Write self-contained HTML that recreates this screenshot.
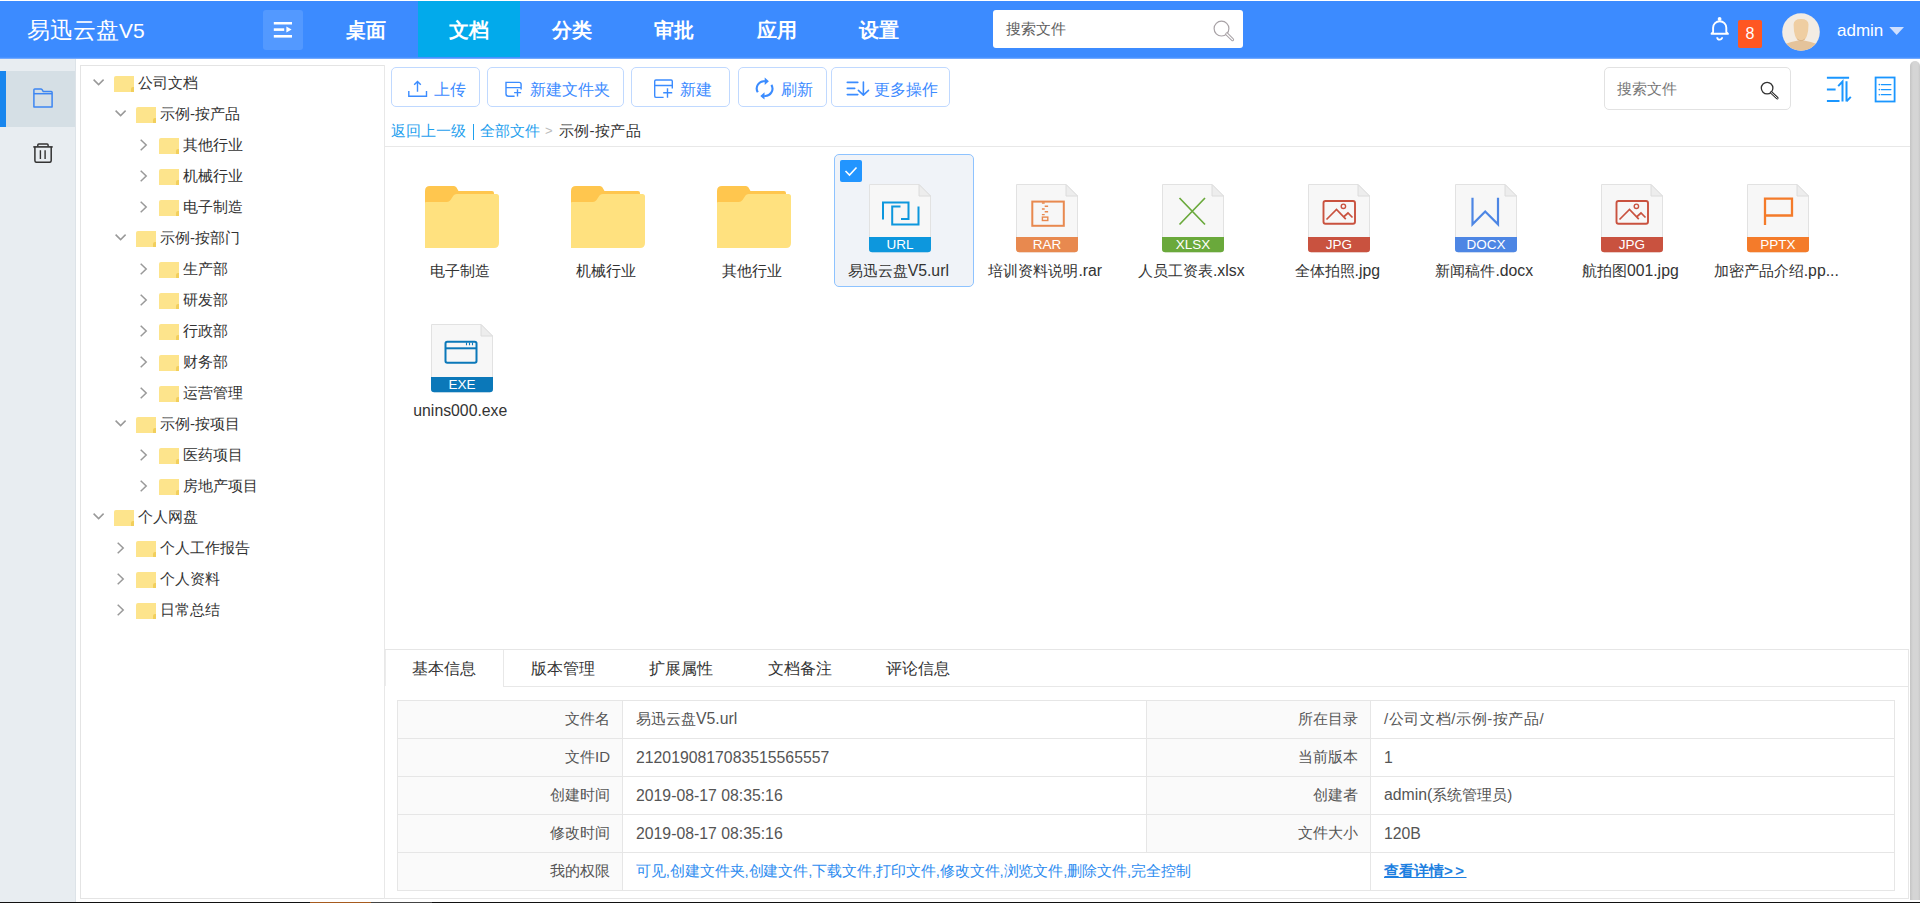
<!DOCTYPE html>
<html><head><meta charset="utf-8">
<style>
*{margin:0;padding:0;box-sizing:border-box}
html,body{width:1920px;height:903px;overflow:hidden;background:#fff;font-family:"Liberation Sans",sans-serif;color:#333}
.a{position:absolute}
#hdr{position:absolute;left:0;top:1px;width:1920px;height:56px;background:#3c8bff}
#hdrb1{position:absolute;left:0;top:57px;width:1920px;height:1px;background:#4892ff}
#hdrb2{position:absolute;left:0;top:58px;width:1920px;height:1px;background:#72a9ff}
.logo{left:27px;top:15px;font-size:22.5px;color:#fff;line-height:30px;white-space:nowrap}
.hamb{left:263px;top:9px;width:40px;height:40px;border-radius:3px;background:rgba(255,255,255,.12)}
.nav{top:0;height:56px;text-align:center;color:#fff;font-weight:bold;font-size:20px;line-height:58px;white-space:nowrap}
.nav.on{background:#02aaeb}
.srch{left:993px;top:9px;width:250px;height:38px;background:#fff;border-radius:3px}
.srch span{position:absolute;left:13px;top:0;line-height:38px;font-size:15px;color:#606060}
#side{position:absolute;left:0;top:59px;width:76px;height:844px;background:#e8edf1;border-right:1px solid #dde3e8}
#tree{position:absolute;left:80px;top:65px;width:305px;height:834px;border:1px solid #e4e4e4;background:#fff}
.tr{position:absolute;height:31px;white-space:nowrap;font-size:15px;color:#333;line-height:31px}
.fd{position:absolute;width:20px;height:16px;background:#fde48c;border-radius:2px 0 0 0}
.fd:after{content:"";position:absolute;right:0;bottom:0;width:3px;height:5px;background:#f2cf5c;border-radius:2px 0 0 0}
.btn{position:absolute;top:67px;height:40px;border:1px solid #c0d9ff;border-radius:5px;background:#fff;color:#3d8bff;font-size:16px;line-height:38px;white-space:nowrap}
.btn svg{position:absolute}
.btn span{position:absolute;top:3px}
.sep{position:absolute;background:#e8e8e8}
.item{position:absolute;width:140px;height:133px}
.lbl{position:absolute;width:200px;text-align:center;font-size:15px;color:#333;white-space:nowrap;line-height:20px}
.pg{position:absolute;width:62px;height:68px}
.tab{position:absolute;top:651px;height:36px;text-align:center;font-size:16px;line-height:36px;color:#333;white-space:nowrap}
table{position:absolute;left:397px;top:700px;width:1497px;border-collapse:collapse;font-size:15px;table-layout:fixed}
td{border:1px solid #e6e6e6;height:38px;padding:0 12px;color:#555;white-space:nowrap;overflow:hidden}
td.k{background:#fafafa;text-align:right}
td.v{padding-left:13px}
.lnk{color:#2d8cf0}
.en{font-size:15.8px}
</style></head><body>
<div id="hdrb1"></div><div id="hdrb2"></div>
<div id="hdr">
  <div class="a logo">易迅云盘<span style="font-size:21px">V5</span></div>
  <div class="a hamb">
    <svg width="40" height="40" viewBox="0 0 40 40" style="position:absolute;left:0;top:0">
      <rect x="10.8" y="12" width="18.2" height="2.5" fill="#fff"/>
      <rect x="10.8" y="18.3" width="10.4" height="2.6" fill="#fff"/>
      <path d="M23.4,16.6 L28.6,19.6 L23.4,22.6 Z" fill="#fff"/>
      <rect x="10.8" y="25" width="18.2" height="2.6" fill="#fff"/>
    </svg>
  </div>
  <div class="a nav" style="left:315.2px;width:102.56px">桌面</div>
  <div class="a nav on" style="left:417.8px;width:102.56px">文档</div>
  <div class="a nav" style="left:520.3px;width:102.56px">分类</div>
  <div class="a nav" style="left:622.9px;width:102.56px">审批</div>
  <div class="a nav" style="left:725.4px;width:102.56px">应用</div>
  <div class="a nav" style="left:828px;width:102.56px">设置</div>
  <div class="a srch"><span>搜索文件</span>
    <svg width="30" height="30" viewBox="0 0 30 30" style="position:absolute;left:214px;top:4px">
      <circle cx="14.5" cy="14.6" r="7.4" fill="none" stroke="#a8a2a6" stroke-width="1.2"/>
      <path d="M19.8,20 L25.5,25.6" stroke="#a8a2a6" stroke-width="3.2" stroke-linecap="round"/>
      <path d="M19.8,20 L25.5,25.6" stroke="#fff" stroke-width="1.2" stroke-linecap="round"/>
    </svg>
  </div>
  <svg class="a" width="30" height="32" viewBox="0 0 30 32" style="left:1705px;top:11px">
    <circle cx="14.6" cy="6.9" r="1.9" fill="#fff"/>
    <path d="M6.5,21.8 L8.1,20 V15.8 A6.6,6.6 0 0 1 21.3,15.8 V20 L23,21.8 Z" fill="none" stroke="#fff" stroke-width="1.9" stroke-linejoin="round"/>
    <path d="M12.2,25.2 A2.5,2.5 0 0 0 17.2,25.2" fill="none" stroke="#fff" stroke-width="1.8"/>
  </svg>
  <div class="a" style="left:1738px;top:19px;width:24px;height:28px;background:#ff5722;border-radius:2px;color:#fff;font-size:16px;line-height:28px;text-align:center">8</div>
  <svg class="a" width="40" height="40" viewBox="0 0 40 40" style="left:1781px;top:11px">
    <defs><clipPath id="avc"><circle cx="20" cy="20" r="18.8"/></clipPath></defs>
    <circle cx="20" cy="20" r="18.8" fill="#f3ece3"/>
    <g clip-path="url(#avc)">
      <path d="M4,40 L4,32 Q10,29.5 17,28.5 L23,28.5 Q30,29.5 36,32 L36,40 Z" fill="#e4c39b"/>
      <path d="M12.6,12.5 Q12.6,6.9 20,6.9 Q27.5,6.9 27.5,12.5 Q27.5,19 26,23.5 Q24.5,28.8 20,29 Q15.5,28.8 14,23.5 Q12.6,19 12.6,12.5 Z" fill="#efcea2"/>
      <path d="M16.3,27 Q20,30.5 23.8,27" fill="none" stroke="#d9b285" stroke-width="1"/>
    </g>
  </svg>
  <div class="a" style="left:1837px;top:15px;font-size:17px;line-height:30px;color:#fff">admin</div>
  <svg class="a" width="16" height="10" viewBox="0 0 16 10" style="left:1889px;top:25px"><path d="M0.3,1 L15,1 L7.65,9 Z" fill="#cfe0ff"/></svg>
</div>
<div id="side">
  <div class="a" style="left:0;top:12px;width:75px;height:56px;background:#d5dfe5"></div>
  <div class="a" style="left:0;top:12px;width:6px;height:56px;background:#1886ee"></div>
  <svg class="a" width="20" height="20" viewBox="0 0 20 20" style="left:33px;top:29px">
    <path d="M0.9,19.1 V1.8 Q0.9,0.9 1.8,0.9 H7.8 Q8.6,0.9 9.1,1.7 L10.1,3.4 H18.3 Q19.1,3.4 19.1,4.2 V19.1 Z" fill="none" stroke="#3d86f2" stroke-width="1.5" stroke-linejoin="round"/>
    <path d="M0.9,5.7 H19.1" stroke="#3d86f2" stroke-width="1.5"/>
  </svg>
  <svg class="a" width="20" height="20" viewBox="0 0 20 20" style="left:33px;top:84px">
    <path d="M4.8,3.6 V1.9 Q4.8,0.9 5.8,0.9 H14.1 Q15.1,0.9 15.1,1.9 V3.6" fill="none" stroke="#333" stroke-width="1.5"/>
    <path d="M0.3,3.9 H19.7" stroke="#333" stroke-width="1.6"/>
    <path d="M1.9,4 V17.6 Q1.9,19.3 3.6,19.3 H16.5 Q18.2,19.3 18.2,17.6 V4" fill="none" stroke="#333" stroke-width="1.5"/>
    <path d="M7.4,7.3 V15.9 M12.1,7.3 V15.9" stroke="#333" stroke-width="1.4"/>
  </svg>
</div>
<div id="tree"></div>
<svg class="a" width="12" height="8" viewBox="0 0 12 8" style="left:93px;top:79px"><path d="M0.6,0.6 L5.6,5.6 L10.6,0.6" fill="none" stroke="#999" stroke-width="1.5"/></svg>
<div class="fd" style="left:114px;top:76px"></div>
<div class="tr" style="left:138px;top:67px">公司文档</div>
<svg class="a" width="12" height="8" viewBox="0 0 12 8" style="left:115px;top:110px"><path d="M0.6,0.6 L5.6,5.6 L10.6,0.6" fill="none" stroke="#999" stroke-width="1.5"/></svg>
<div class="fd" style="left:136px;top:107px"></div>
<div class="tr" style="left:160px;top:98px">示例-按产品</div>
<svg class="a" width="8" height="12" viewBox="0 0 8 12" style="left:140px;top:138.5px"><path d="M0.7,0.7 L6.2,6 L0.7,11.3" fill="none" stroke="#999" stroke-width="1.5"/></svg>
<div class="fd" style="left:159px;top:138px"></div>
<div class="tr" style="left:183px;top:129px">其他行业</div>
<svg class="a" width="8" height="12" viewBox="0 0 8 12" style="left:140px;top:169.5px"><path d="M0.7,0.7 L6.2,6 L0.7,11.3" fill="none" stroke="#999" stroke-width="1.5"/></svg>
<div class="fd" style="left:159px;top:169px"></div>
<div class="tr" style="left:183px;top:160px">机械行业</div>
<svg class="a" width="8" height="12" viewBox="0 0 8 12" style="left:140px;top:200.5px"><path d="M0.7,0.7 L6.2,6 L0.7,11.3" fill="none" stroke="#999" stroke-width="1.5"/></svg>
<div class="fd" style="left:159px;top:200px"></div>
<div class="tr" style="left:183px;top:191px">电子制造</div>
<svg class="a" width="12" height="8" viewBox="0 0 12 8" style="left:115px;top:234px"><path d="M0.6,0.6 L5.6,5.6 L10.6,0.6" fill="none" stroke="#999" stroke-width="1.5"/></svg>
<div class="fd" style="left:136px;top:231px"></div>
<div class="tr" style="left:160px;top:222px">示例-按部门</div>
<svg class="a" width="8" height="12" viewBox="0 0 8 12" style="left:140px;top:262.5px"><path d="M0.7,0.7 L6.2,6 L0.7,11.3" fill="none" stroke="#999" stroke-width="1.5"/></svg>
<div class="fd" style="left:159px;top:262px"></div>
<div class="tr" style="left:183px;top:253px">生产部</div>
<svg class="a" width="8" height="12" viewBox="0 0 8 12" style="left:140px;top:293.5px"><path d="M0.7,0.7 L6.2,6 L0.7,11.3" fill="none" stroke="#999" stroke-width="1.5"/></svg>
<div class="fd" style="left:159px;top:293px"></div>
<div class="tr" style="left:183px;top:284px">研发部</div>
<svg class="a" width="8" height="12" viewBox="0 0 8 12" style="left:140px;top:324.5px"><path d="M0.7,0.7 L6.2,6 L0.7,11.3" fill="none" stroke="#999" stroke-width="1.5"/></svg>
<div class="fd" style="left:159px;top:324px"></div>
<div class="tr" style="left:183px;top:315px">行政部</div>
<svg class="a" width="8" height="12" viewBox="0 0 8 12" style="left:140px;top:355.5px"><path d="M0.7,0.7 L6.2,6 L0.7,11.3" fill="none" stroke="#999" stroke-width="1.5"/></svg>
<div class="fd" style="left:159px;top:355px"></div>
<div class="tr" style="left:183px;top:346px">财务部</div>
<svg class="a" width="8" height="12" viewBox="0 0 8 12" style="left:140px;top:386.5px"><path d="M0.7,0.7 L6.2,6 L0.7,11.3" fill="none" stroke="#999" stroke-width="1.5"/></svg>
<div class="fd" style="left:159px;top:386px"></div>
<div class="tr" style="left:183px;top:377px">运营管理</div>
<svg class="a" width="12" height="8" viewBox="0 0 12 8" style="left:115px;top:420px"><path d="M0.6,0.6 L5.6,5.6 L10.6,0.6" fill="none" stroke="#999" stroke-width="1.5"/></svg>
<div class="fd" style="left:136px;top:417px"></div>
<div class="tr" style="left:160px;top:408px">示例-按项目</div>
<svg class="a" width="8" height="12" viewBox="0 0 8 12" style="left:140px;top:448.5px"><path d="M0.7,0.7 L6.2,6 L0.7,11.3" fill="none" stroke="#999" stroke-width="1.5"/></svg>
<div class="fd" style="left:159px;top:448px"></div>
<div class="tr" style="left:183px;top:439px">医药项目</div>
<svg class="a" width="8" height="12" viewBox="0 0 8 12" style="left:140px;top:479.5px"><path d="M0.7,0.7 L6.2,6 L0.7,11.3" fill="none" stroke="#999" stroke-width="1.5"/></svg>
<div class="fd" style="left:159px;top:479px"></div>
<div class="tr" style="left:183px;top:470px">房地产项目</div>
<svg class="a" width="12" height="8" viewBox="0 0 12 8" style="left:93px;top:513px"><path d="M0.6,0.6 L5.6,5.6 L10.6,0.6" fill="none" stroke="#999" stroke-width="1.5"/></svg>
<div class="fd" style="left:114px;top:510px"></div>
<div class="tr" style="left:138px;top:501px">个人网盘</div>
<svg class="a" width="8" height="12" viewBox="0 0 8 12" style="left:117px;top:541.5px"><path d="M0.7,0.7 L6.2,6 L0.7,11.3" fill="none" stroke="#999" stroke-width="1.5"/></svg>
<div class="fd" style="left:136px;top:541px"></div>
<div class="tr" style="left:160px;top:532px">个人工作报告</div>
<svg class="a" width="8" height="12" viewBox="0 0 8 12" style="left:117px;top:572.5px"><path d="M0.7,0.7 L6.2,6 L0.7,11.3" fill="none" stroke="#999" stroke-width="1.5"/></svg>
<div class="fd" style="left:136px;top:572px"></div>
<div class="tr" style="left:160px;top:563px">个人资料</div>
<svg class="a" width="8" height="12" viewBox="0 0 8 12" style="left:117px;top:603.5px"><path d="M0.7,0.7 L6.2,6 L0.7,11.3" fill="none" stroke="#999" stroke-width="1.5"/></svg>
<div class="fd" style="left:136px;top:603px"></div>
<div class="tr" style="left:160px;top:594px">日常总结</div><div class="btn" style="left:391px;width:89px"><svg width="30" height="28" viewBox="0 0 30 28" style="left:10px;top:6px"><path d="M15.5,17.8 V7.4 M12.2,10.8 L15.5,7.4 L18.8,10.8 M6.8,16.9 V22.2 H24.5 V16.9" fill="none" stroke="#3b8cff" stroke-width="1.4"/></svg><span style="left:42px">上传</span></div>
<div class="btn" style="left:487px;width:137px"><svg width="28" height="28" viewBox="0 0 28 28" style="left:12px;top:6px"><path d="M14.6,22.2 H8.5 Q6,22.2 6,19.7 V8.4 H19.1 Q21.1,8.4 21.1,10.4 V15.5 M6,13.6 H21.1 M17.5,15.2 V22.6 M14.1,18.6 H21.1" fill="none" stroke="#3b8cff" stroke-width="1.4"/></svg><span style="left:42px">新建文件夹</span></div>
<div class="btn" style="left:631px;width:99px"><svg width="28" height="28" viewBox="0 0 28 28" style="left:18px;top:6px"><path d="M13.6,23.4 H6.2 Q4.7,23.4 4.7,21.9 V7.2 Q4.7,6 5.9,6 H21.1 Q22.3,6 22.3,7.2 V14.6 M4.7,11.5 H22.3 M17.5,14.3 V23.7 M13.2,18.8 H22.2" fill="none" stroke="#3b8cff" stroke-width="1.4"/></svg><span style="left:47.5px">新建</span></div>
<div class="btn" style="left:738px;width:89px"><svg width="28" height="28" viewBox="0 0 28 28" style="left:11px;top:6px"><path d="M7.8,18.3 A7.3,7.3 0 0 1 15,7.3 M21.4,10.9 A7.3,7.3 0 0 1 14.2,21.9" fill="none" stroke="#3b8cff" stroke-width="2.1"/><path d="M14.7,3.6 L18.9,7.3 L14.7,11 Z M14.5,18.2 L10.3,21.9 L14.5,25.6 Z" fill="#3b8cff"/></svg><span style="left:42px">刷新</span></div>
<div class="btn" style="left:831px;width:119px"><svg width="32" height="28" viewBox="0 0 32 28" style="left:10px;top:6px"><path d="M5.3,8.4 H15.8 M5.3,14.4 H12.7 M5.3,20.6 H15.8 M21.4,8 V21.1 M16.4,16.3 L21.4,21.1 L26.5,16.3" fill="none" stroke="#3b8cff" stroke-width="1.6" stroke-linecap="round" stroke-linejoin="round"/></svg><span style="left:42px">更多操作</span></div>
<div class="a" style="left:1604px;top:67px;width:187px;height:43px;border:1px solid #e2e2e2;border-radius:5px;background:#fff">
<span class="a" style="left:12px;top:0;line-height:41px;font-size:15px;color:#777">搜索文件</span>
<svg class="a" width="36" height="30" viewBox="0 0 36 30" style="left:145px;top:8px"><circle cx="17.1" cy="12.1" r="5.8" fill="none" stroke="#333" stroke-width="1.3"/><path d="M21.3,16.6 L27.2,22.1" stroke="#333" stroke-width="2.8" stroke-linecap="round"/><path d="M21.3,16.6 L27.2,22.1" stroke="#fff" stroke-width="0.9" stroke-linecap="round"/></svg>
</div>
<svg class="a" width="34" height="34" viewBox="0 0 34 34" style="left:1822px;top:72px"><path d="M4.9,5.8 H27.1 M4.9,17.5 H13.6 M4.9,29 H17.5 M16.2,14.1 L20.5,9.6 V29.4 M24.5,29.4 V9.2 M24.5,29.4 L28.8,24.9" fill="none" stroke="#1a96ff" stroke-width="2"/></svg>
<svg class="a" width="24" height="28" viewBox="0 0 24 28" style="left:1872px;top:75px"><rect x="3.6" y="2.5" width="19" height="24" fill="none" stroke="#1a96ff" stroke-width="1.8"/><path d="M9.3,9.6 H18.9 M9.3,14.6 H18.9 M9.3,19.7 H18.9" stroke="#1a96ff" stroke-width="1.3" stroke-linecap="round"/><circle cx="7.3" cy="9.6" r="0.8" fill="#1a96ff"/><circle cx="7.3" cy="14.6" r="0.8" fill="#1a96ff"/><circle cx="7.3" cy="19.7" r="0.8" fill="#1a96ff"/></svg>
<div class="a" style="left:391px;top:120.5px;font-size:15px;line-height:20px;white-space:nowrap;color:#1ea0ee">返回上一级</div>
<div class="a" style="left:472.5px;top:124px;width:1.2px;height:16px;background:#1ea0ee"></div>
<div class="a" style="left:479.5px;top:120.5px;font-size:15px;line-height:20px;white-space:nowrap;color:#1ea0ee">全部文件</div>
<div class="a" style="left:545px;top:120.5px;font-size:13px;line-height:20px;white-space:nowrap;color:#bbb">&gt;</div>
<div class="a" style="left:558.5px;top:120.5px;font-size:15px;line-height:20px;white-space:nowrap;color:#333;letter-spacing:0.45px">示例-按产品</div>
<div class="sep" style="left:384px;top:65px;width:1px;height:834px"></div>
<div class="sep" style="left:385px;top:146px;width:1525px;height:1px"></div>
<div class="a" style="left:834.0px;top:154px;width:140px;height:133px;border:1px solid #8ec3ff;border-radius:5px;background:#f0f3f8"></div>
<div class="a" style="left:840.0px;top:160px;width:22px;height:22px;background:#2295ff;border-radius:2px"><svg width="22" height="22" viewBox="0 0 22 22"><path d="M5.5,11 L9.5,15 L16.5,7.5" fill="none" stroke="#fff" stroke-width="1.6"/></svg></div>
<svg class="a" width="75" height="63" viewBox="0 0 75 63" style="left:425.0px;top:186px">
<path d="M0,5 Q0,0 5,0 H29 Q30.5,0 31.5,1.5 L33.5,5 H67 Q69,5 69,7 V30 H0 Z" fill="#ffc64e"/>
<path d="M0,17 Q0,16 1,16 H22 Q24,16 25.5,14 L28.5,9.5 Q29.5,8 31.5,8 H71.5 Q74,8 74,10.5 V57 Q74,62 69,62 H0 Z" fill="#ffe17f"/>
</svg>
<svg class="a" width="75" height="63" viewBox="0 0 75 63" style="left:571.0px;top:186px">
<path d="M0,5 Q0,0 5,0 H29 Q30.5,0 31.5,1.5 L33.5,5 H67 Q69,5 69,7 V30 H0 Z" fill="#ffc64e"/>
<path d="M0,17 Q0,16 1,16 H22 Q24,16 25.5,14 L28.5,9.5 Q29.5,8 31.5,8 H71.5 Q74,8 74,10.5 V57 Q74,62 69,62 H0 Z" fill="#ffe17f"/>
</svg>
<svg class="a" width="75" height="63" viewBox="0 0 75 63" style="left:717.0px;top:186px">
<path d="M0,5 Q0,0 5,0 H29 Q30.5,0 31.5,1.5 L33.5,5 H67 Q69,5 69,7 V30 H0 Z" fill="#ffc64e"/>
<path d="M0,17 Q0,16 1,16 H22 Q24,16 25.5,14 L28.5,9.5 Q29.5,8 31.5,8 H71.5 Q74,8 74,10.5 V57 Q74,62 69,62 H0 Z" fill="#ffe17f"/>
</svg>
<svg class="a" width="63" height="69" viewBox="0 0 63 69" style="left:869.0px;top:184px">
<path d="M0.5,0.5 H50 L61.5,12 V65 Q61.5,67.8 58.7,67.8 H3.3 Q0.5,67.8 0.5,65 Z" fill="#f7f7f7" stroke="#e2e2e2"/>
<path d="M50,0.5 V12 H61.5 Z" fill="#ededed" stroke="#dcdcdc" stroke-linejoin="round"/>
<path d="M0,53 H62 V65 Q62,68.2 58.8,68.2 H3.2 Q0,68.2 0,65 Z" fill="#0d97dd"/>
<text x="31" y="65.3" text-anchor="middle" font-family="Liberation Sans" font-size="13.5" fill="#fff">URL</text>
<path d="M14,35.5 V18.5 H39.5 V35 H32 M31.5,22.5 H23.2 V40.5 H49.5 V22.5" fill="none" stroke="#0d97dd" stroke-width="2"/>
</svg>
<svg class="a" width="63" height="69" viewBox="0 0 63 69" style="left:1016.0px;top:184px">
<path d="M0.5,0.5 H50 L61.5,12 V65 Q61.5,67.8 58.7,67.8 H3.3 Q0.5,67.8 0.5,65 Z" fill="#f7f7f7" stroke="#e2e2e2"/>
<path d="M50,0.5 V12 H61.5 Z" fill="#ededed" stroke="#dcdcdc" stroke-linejoin="round"/>
<path d="M0,53 H62 V65 Q62,68.2 58.8,68.2 H3.2 Q0,68.2 0,65 Z" fill="#e8894f"/>
<text x="31" y="65.3" text-anchor="middle" font-family="Liberation Sans" font-size="13.5" fill="#fff">RAR</text>
<rect x="16.3" y="17.6" width="31.5" height="24.2" fill="none" stroke="#e8894f" stroke-width="2"/><path d="M25.9,19 h2.8 M28.7,22.2 h3.4 M25.9,25 h2.8 M28.7,27.8 h3.4 M25.9,30.6 h2.8" stroke="#e8894f" stroke-width="1.4"/><rect x="26.4" y="33.1" width="5.4" height="3.4" fill="none" stroke="#e8894f" stroke-width="1.4"/>
</svg>
<svg class="a" width="63" height="69" viewBox="0 0 63 69" style="left:1162.0px;top:184px">
<path d="M0.5,0.5 H50 L61.5,12 V65 Q61.5,67.8 58.7,67.8 H3.3 Q0.5,67.8 0.5,65 Z" fill="#f7f7f7" stroke="#e2e2e2"/>
<path d="M50,0.5 V12 H61.5 Z" fill="#ededed" stroke="#dcdcdc" stroke-linejoin="round"/>
<path d="M0,53 H62 V65 Q62,68.2 58.8,68.2 H3.2 Q0,68.2 0,65 Z" fill="#6aa93b"/>
<text x="31" y="65.3" text-anchor="middle" font-family="Liberation Sans" font-size="13.5" fill="#fff">XLSX</text>
<path d="M17.5,14 L43,40.5 M43,14 L17.5,40.5" stroke="#6aa93b" stroke-width="1.7"/>
</svg>
<svg class="a" width="63" height="69" viewBox="0 0 63 69" style="left:1308.0px;top:184px">
<path d="M0.5,0.5 H50 L61.5,12 V65 Q61.5,67.8 58.7,67.8 H3.3 Q0.5,67.8 0.5,65 Z" fill="#f7f7f7" stroke="#e2e2e2"/>
<path d="M50,0.5 V12 H61.5 Z" fill="#ededed" stroke="#dcdcdc" stroke-linejoin="round"/>
<path d="M0,53 H62 V65 Q62,68.2 58.8,68.2 H3.2 Q0,68.2 0,65 Z" fill="#c9523f"/>
<text x="31" y="65.3" text-anchor="middle" font-family="Liberation Sans" font-size="13.5" fill="#fff">JPG</text>
<rect x="15.5" y="17" width="31.5" height="22.8" rx="2" fill="none" stroke="#c9523f" stroke-width="1.9"/><path d="M18.5,35.5 L28.5,25.5 L37.8,35.2 M35.5,33 L40,29 L44.5,33.5" fill="none" stroke="#c9523f" stroke-width="1.7"/><circle cx="35.4" cy="22.3" r="2.2" fill="none" stroke="#c9523f" stroke-width="1.4"/>
</svg>
<svg class="a" width="63" height="69" viewBox="0 0 63 69" style="left:1455.0px;top:184px">
<path d="M0.5,0.5 H50 L61.5,12 V65 Q61.5,67.8 58.7,67.8 H3.3 Q0.5,67.8 0.5,65 Z" fill="#f7f7f7" stroke="#e2e2e2"/>
<path d="M50,0.5 V12 H61.5 Z" fill="#ededed" stroke="#dcdcdc" stroke-linejoin="round"/>
<path d="M0,53 H62 V65 Q62,68.2 58.8,68.2 H3.2 Q0,68.2 0,65 Z" fill="#4d86e4"/>
<text x="31" y="65.3" text-anchor="middle" font-family="Liberation Sans" font-size="13.5" fill="#fff">DOCX</text>
<path d="M17.5,13.7 V40.3 L30.2,27.5 L43,40.3 V13.7" fill="none" stroke="#4d86e4" stroke-width="2.2"/>
</svg>
<svg class="a" width="63" height="69" viewBox="0 0 63 69" style="left:1601.0px;top:184px">
<path d="M0.5,0.5 H50 L61.5,12 V65 Q61.5,67.8 58.7,67.8 H3.3 Q0.5,67.8 0.5,65 Z" fill="#f7f7f7" stroke="#e2e2e2"/>
<path d="M50,0.5 V12 H61.5 Z" fill="#ededed" stroke="#dcdcdc" stroke-linejoin="round"/>
<path d="M0,53 H62 V65 Q62,68.2 58.8,68.2 H3.2 Q0,68.2 0,65 Z" fill="#c9523f"/>
<text x="31" y="65.3" text-anchor="middle" font-family="Liberation Sans" font-size="13.5" fill="#fff">JPG</text>
<rect x="15.5" y="17" width="31.5" height="22.8" rx="2" fill="none" stroke="#c9523f" stroke-width="1.9"/><path d="M18.5,35.5 L28.5,25.5 L37.8,35.2 M35.5,33 L40,29 L44.5,33.5" fill="none" stroke="#c9523f" stroke-width="1.7"/><circle cx="35.4" cy="22.3" r="2.2" fill="none" stroke="#c9523f" stroke-width="1.4"/>
</svg>
<svg class="a" width="63" height="69" viewBox="0 0 63 69" style="left:1747.0px;top:184px">
<path d="M0.5,0.5 H50 L61.5,12 V65 Q61.5,67.8 58.7,67.8 H3.3 Q0.5,67.8 0.5,65 Z" fill="#f7f7f7" stroke="#e2e2e2"/>
<path d="M50,0.5 V12 H61.5 Z" fill="#ededed" stroke="#dcdcdc" stroke-linejoin="round"/>
<path d="M0,53 H62 V65 Q62,68.2 58.8,68.2 H3.2 Q0,68.2 0,65 Z" fill="#f47b2a"/>
<text x="31" y="65.3" text-anchor="middle" font-family="Liberation Sans" font-size="13.5" fill="#fff">PPTX</text>
<path d="M18,41 V14.7 H45 V31.5 H18" fill="none" stroke="#f47b2a" stroke-width="2.3"/>
</svg>
<svg class="a" width="63" height="69" viewBox="0 0 63 69" style="left:431.0px;top:324px">
<path d="M0.5,0.5 H50 L61.5,12 V65 Q61.5,67.8 58.7,67.8 H3.3 Q0.5,67.8 0.5,65 Z" fill="#f7f7f7" stroke="#e2e2e2"/>
<path d="M50,0.5 V12 H61.5 Z" fill="#ededed" stroke="#dcdcdc" stroke-linejoin="round"/>
<path d="M0,53 H62 V65 Q62,68.2 58.8,68.2 H3.2 Q0,68.2 0,65 Z" fill="#0b78b9"/>
<text x="31" y="65.3" text-anchor="middle" font-family="Liberation Sans" font-size="13.5" fill="#fff">EXE</text>
<rect x="14.5" y="17.8" width="31" height="21" rx="1.8" fill="none" stroke="#0b78b9" stroke-width="2"/><path d="M14.5,24.3 H45.5" stroke="#0b78b9" stroke-width="2"/><path d="M35.5,18.5 V21.2 M38.5,18.5 V21.2 M41.5,18.5 V21.2" stroke="#0b78b9" stroke-width="1.1"/>
</svg>
<div class="lbl" style="left:360.3px;top:261px">电子制造</div>
<div class="lbl" style="left:506.3px;top:261px">机械行业</div>
<div class="lbl" style="left:652.3px;top:261px">其他行业</div>
<div class="lbl" style="left:798.3px;top:261px">易迅云盘<span class="en">V5.url</span></div>
<div class="lbl" style="left:945.3px;top:261px">培训资料说明<span class="en">.rar</span></div>
<div class="lbl" style="left:1091.3px;top:261px">人员工资表<span class="en">.xlsx</span></div>
<div class="lbl" style="left:1237.3px;top:261px">全体拍照<span class="en">.jpg</span></div>
<div class="lbl" style="left:1384.3px;top:261px">新闻稿件<span class="en">.docx</span></div>
<div class="lbl" style="left:1530.3px;top:261px">航拍图<span class="en">001.jpg</span></div>
<div class="lbl" style="left:1676.3px;top:261px">加密产品介绍<span class="en">.pp...</span></div>
<div class="lbl" style="left:360.3px;top:401px"><span class="en">unins000.exe</span></div>
<div class="a" style="left:385px;top:649px;width:1524px;height:250px;border:1px solid #e6e6e6;border-left:none"></div>
<div class="sep" style="left:503px;top:686px;width:1405px;height:1px"></div>
<div class="sep" style="left:503px;top:650px;width:1px;height:37px"></div>
<div class="sep" style="left:385px;top:650px;width:1px;height:36px;background:#ececec"></div>
<div class="tab" style="left:384.7px;width:118.6px">基本信息</div>
<div class="tab" style="left:503.3px;width:118.6px">版本管理</div>
<div class="tab" style="left:621.9px;width:118.6px">扩展属性</div>
<div class="tab" style="left:740.5px;width:118.6px">文档备注</div>
<div class="tab" style="left:859.1px;width:118.6px">评论信息</div>
<table><colgroup><col style="width:225px"><col style="width:524px"><col style="width:224px"><col style="width:524px"></colgroup><tr><td class="k">文件名</td><td class="v">易迅云盘<span class="en">V5.url</span></td><td class="k">所在目录</td><td class="v" style="letter-spacing:0.6px">/公司文档/示例-按产品/</td></tr><tr><td class="k">文件ID</td><td class="v"><span class="en">2120190817083515565557</span></td><td class="k">当前版本</td><td class="v"><span class="en">1</span></td></tr><tr><td class="k">创建时间</td><td class="v"><span class="en">2019-08-17 08:35:16</span></td><td class="k">创建者</td><td class="v"><span class="en">admin(</span>系统管理员)</td></tr><tr><td class="k">修改时间</td><td class="v"><span class="en">2019-08-17 08:35:16</span></td><td class="k">文件大小</td><td class="v"><span class="en">120B</span></td></tr><tr><td class="k">我的权限</td><td class="v" colspan="2"><span class="lnk" style="letter-spacing:-0.085px">可见,创建文件夹,创建文件,下载文件,打印文件,修改文件,浏览文件,删除文件,完全控制</span></td><td class="v"><a style="color:#1e7fe0;font-weight:bold;text-decoration:underline">查看详情<span style="letter-spacing:2.5px">&gt;&gt;</span></a></td></tr></table>
<div class="a" style="left:1910px;top:59px;width:10px;height:843px;background:#fff"></div>
<div class="a" style="left:1910px;top:61px;width:10px;height:839px;background:linear-gradient(to right,#c4c4c4,#d5d5d5 30%,#d5d5d5 80%,#c8c8c8);border-radius:5px 5px 0 0"></div>
<div class="a" style="left:0;top:902px;width:1920px;height:1px;background:#111"></div>
<div class="a" style="left:310px;top:902px;width:61px;height:1px;background:#a65a1e"></div>
<div class="a" style="left:371px;top:902px;width:61px;height:1px;background:#444"></div>
</body></html>
